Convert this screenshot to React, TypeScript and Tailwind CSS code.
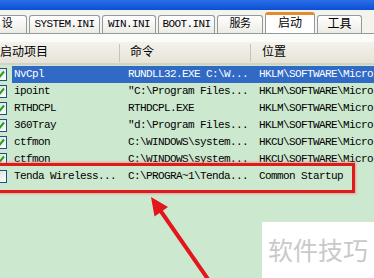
type Row = {
  name: string
  cmd: string
  loc: string
  checked: boolean
  selected?: boolean
}

const rows: Row[] = [
  { name: 'NvCpl', cmd: 'RUNDLL32.EXE C:\\W...', loc: 'HKLM\\SOFTWARE\\Micro', checked: true, selected: true },
  { name: 'ipoint', cmd: '"C:\\Program Files...', loc: 'HKLM\\SOFTWARE\\Micro', checked: true },
  { name: 'RTHDCPL', cmd: 'RTHDCPL.EXE', loc: 'HKLM\\SOFTWARE\\Micro', checked: true },
  { name: '360Tray', cmd: '"d:\\Program Files...', loc: 'HKLM\\SOFTWARE\\Micro', checked: true },
  { name: 'ctfmon', cmd: 'C:\\WINDOWS\\system...', loc: 'HKCU\\SOFTWARE\\Micro', checked: true },
  { name: 'ctfmon', cmd: 'C:\\WINDOWS\\system...', loc: 'HKCU\\SOFTWARE\\Micro', checked: true },
  { name: 'Tenda Wireless...', cmd: 'C:\\PROGRA~1\\Tenda...', loc: 'Common Startup', checked: false },
]

const tabs = [
  { label: '设', width: 'w-[40px] -ml-[17px]' },
  { label: 'SYSTEM.INI', width: 'w-[71px]' },
  { label: 'WIN.INI', width: 'w-[54px]' },
  { label: 'BOOT.INI', width: 'w-[57px]' },
  { label: '服务', width: 'w-[46px]' },
]

const mono = "font-['Liberation_Mono','Noto_Sans_CJK_SC',monospace]"

function CheckBox({ checked }: { checked: boolean }) {
  return (
    <span className="flex h-[13px] w-[13px] shrink-0 items-center justify-center border border-[#1c5180] bg-gradient-to-br from-[#dcdcd7] to-white">
      {checked && (
        <svg width="9" height="9" viewBox="0 0 9 9">
          <path d="M1 4.5 L3.5 7 L8 1.5" fill="none" stroke="#21a121" strokeWidth="2" />
        </svg>
      )}
    </span>
  )
}

export default function App() {
  return (
    <div className={`relative h-[278px] w-[374px] overflow-hidden bg-[#cce8cf] text-black ${mono}`}>
      <div className="h-[10px] bg-gradient-to-b from-[#2a6ee6] to-[#0a50d6]" />

      <div className="flex h-[23px] items-end gap-[2px] bg-[#f4f3ee] pl-[4px]">
        {tabs.map((tab) => (
          <div
            key={tab.label}
            className={`${tab.width} flex h-[18px] shrink-0 items-center justify-center rounded-t-[3px] border border-b-0 border-[#919b9c] bg-gradient-to-b from-white to-[#ecebe6] text-[11px] tracking-[-0.6px]`}
          >
            {tab.label}
          </div>
        ))}
        <div className="flex h-[21px] w-[50px] shrink-0 items-center justify-center rounded-t-[3px] border-x border-t-[3px] border-x-[#919b9c] border-t-[#e68b2c] bg-white pb-[1px] text-[12px]">
          启动
        </div>
        <div className="flex h-[18px] w-[45px] shrink-0 items-center justify-center rounded-t-[3px] border border-b-0 border-[#919b9c] bg-gradient-to-b from-white to-[#ecebe6] text-[12px]">
          工具
        </div>
      </div>

      <div className="h-[9px] border-t border-[#919b9c] bg-[#fbfbf9]" />

      <div className="flex h-[23px] items-center border-b-[2px] border-[#d6d2c2] bg-gradient-to-b from-[#f3f2ec] to-[#e6e4d8] text-[12px]">
        <div className="w-[120px] shrink-0 border-r border-[#c7c5b2]">启动项目</div>
        <div className="w-[131px] shrink-0 border-r border-[#c7c5b2] pl-[10px]">命令</div>
        <div className="pl-[11px]">位置</div>
      </div>

      <div className="pt-[1px]">
        {rows.map((row, i) => (
          <div key={i} className="flex h-[17px] items-center text-[11px] tracking-[-0.6px]">
            <div className="-ml-[6px] mr-[5px]">
              <CheckBox checked={row.checked} />
            </div>
            <div
              className={`flex h-full flex-1 items-center overflow-hidden whitespace-nowrap ${row.selected ? 'bg-[#316ac5] text-white' : ''}`}
            >
              <span className="w-[108px] shrink-0 pl-[2px]">{row.name}</span>
              <span className="w-[131px] shrink-0 pl-[8px]">{row.cmd}</span>
              <span className="pl-[8px]">{row.loc}</span>
            </div>
          </div>
        ))}
      </div>

      <div className="pointer-events-none absolute left-[-10px] top-[163px] h-[30px] w-[365px] border-[3px] border-[#dd1b1b] shadow-[0_0_2px_1px_rgba(240,120,120,0.6)]" />

      <svg className="pointer-events-none absolute left-0 top-0" width="374" height="278" viewBox="0 0 374 278">
        <line x1="210" y1="282" x2="160" y2="210" stroke="#e2161b" strokeWidth="4" />
        <polygon points="151,197 168,207 154.5,216.5" fill="#e2161b" />
      </svg>

      <div className="absolute left-[262px] top-[222px] flex h-[56px] w-[112px] items-center justify-center bg-white font-['Noto_Sans_CJK_SC',sans-serif] text-[25px] text-[#c9c9c9]">
        软件技巧
      </div>
    </div>
  )
}
